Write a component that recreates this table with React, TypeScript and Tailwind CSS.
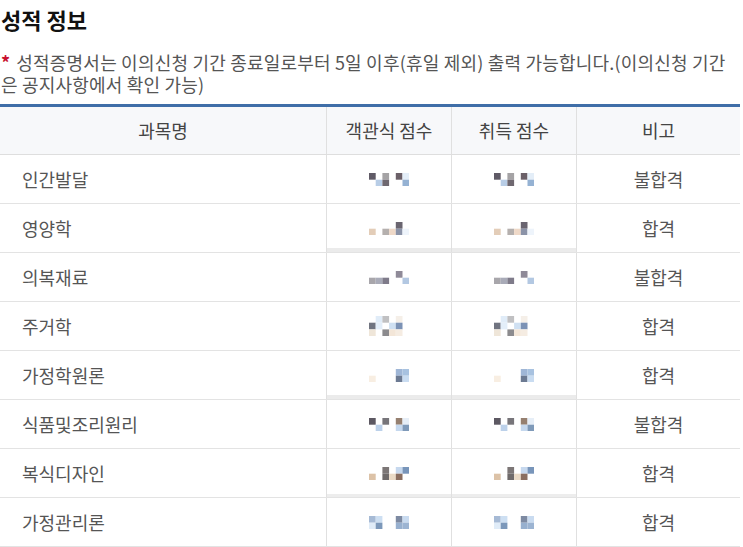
/**
 * 성적 정보 — grade table with pixelated (masked) score cells.
 */

const FONT = "font-['Noto_Sans_CJK_KR','Noto_Sans',sans-serif]";

type Row = {
  name: string;
  result: string;
  mosaic: string[]; // each line: 6 cells, "-" = empty
  band?: string; // extra bottom band on the score cells
};

const ROWS: Row[] = [
  {
    name: "인간발달",
    result: "불합격",
    mosaic: ["#5f5a66 - #a5a3a5 - #6b6068 #e4eef8", "- #b8cde6 #6f6870 - - #95b2d3"],
  },
  {
    name: "영양학",
    result: "합격",
    mosaic: ["- - - - #6a6570 -", "#e3cdb8 - #b5b0ae #efd9c8 #8b93a8 #eef4fb"],
    band: "shadow-[inset_0_-4px_0_#ebebeb]",
  },
  {
    name: "의복재료",
    result: "불합격",
    mosaic: ["- - - - #8f8a98 -", "#a8a6ab #a9abb8 #7f7b8a - - #b3c8e2"],
  },
  {
    name: "주거학",
    result: "합격",
    mosaic: [
      "- #e0ecf8 #c0c0c2 - #f5efe8 -",
      "#707480 #e3eef9 - #cfe0f2 #7c92b5 -",
      "#efe6d9 - #8c8b8e #f3e6d8 #f5ece2 -",
    ],
  },
  {
    name: "가정학원론",
    result: "합격",
    mosaic: ["- - - - #9fb6d6 #a8c2e0", "#f8eee2 - - - #6c7a92 #c9dcf1"],
    band: "shadow-[inset_0_-4px_0_#ebebeb]",
  },
  {
    name: "식품및조리원리",
    result: "불합격",
    mosaic: ["#5c5862 - #77757a - #968070 #e6eef7", "- #bcd1ea - - #c5d8ee #7f9ab9"],
  },
  {
    name: "복식디자인",
    result: "합격",
    mosaic: ["- - #7c7676 - #c6d8ee #7895ba", "#dcc2a7 - #6f6a6a #eadac6 #8a6e60 -"],
    band: "shadow-[inset_0_-3px_0_#ededed]",
  },
  {
    name: "가정관리론",
    result: "합격",
    mosaic: ["#a6bad5 #cddff2 - - #7d8aa2 #c9dbf0", "#e0ecf8 #7c98ba - - #97b0cf #9cb4d2"],
  },
];

function Mosaic({ lines }: { lines: string[] }) {
  const size = 6.7;
  const cells = lines.map((l) => l.split(" "));
  return (
    <svg width={40} height={Math.round(cells.length * size)} className="block">
      {cells.map((line, r) =>
        line.map((c, i) =>
          c === "-" ? null : (
            <rect key={`${r}-${i}`} x={i * size} y={r * size} width={size} height={size} fill={c} />
          )
        )
      )}
    </svg>
  );
}

export default function App() {
  return (
    <div className={`w-[743px] h-[547px] overflow-hidden bg-white ${FONT}`}>
      {/* Title */}
      <h1 className="pt-[5px] pl-[1px] text-[22px] leading-[28px] font-bold text-[#111]">성적 정보</h1>

      {/* Notice */}
      <p className="mt-[18px] pl-[1px] text-[18px] leading-[22px] tracking-[0.2px] text-[#555]">
        <span className="text-[#c8102e] font-bold mr-[6px]">*</span>
        성적증명서는 이의신청 기간 종료일로부터 5일 이후(휴일 제외) 출력 가능합니다.(이의신청 기간
        <br />
        은 공지사항에서 확인 가능)
      </p>

      {/* Table */}
      <div className="mt-[9px] w-[740px] border-t-[3px] border-[#3f6ea8] text-[18px] text-[#555]">
        <div className="grid grid-cols-[326px_125px_125px_164px] h-[48px] bg-[#f7f8fa] border-b border-[#dedede] text-[#444]">
          <div className="flex items-center justify-center">과목명</div>
          <div className="flex items-center justify-center border-l border-[#e0e0e0]">객관식 점수</div>
          <div className="flex items-center justify-center border-l border-[#e0e0e0]">취득 점수</div>
          <div className="flex items-center justify-center border-l border-[#e0e0e0]">비고</div>
        </div>

        {ROWS.map((row) => (
          <div
            key={row.name}
            className="grid grid-cols-[326px_125px_125px_164px] h-[49px] border-b border-[#e3e3e3]"
          >
            <div className="flex items-center pl-[22px]">{row.name}</div>
            <div className={`flex items-center justify-center border-l border-[#e0e0e0] ${row.band ?? ""}`}>
              <Mosaic lines={row.mosaic} />
            </div>
            <div className={`flex items-center justify-center border-l border-[#e0e0e0] ${row.band ?? ""}`}>
              <Mosaic lines={row.mosaic} />
            </div>
            <div className="flex items-center justify-center border-l border-[#e0e0e0]">{row.result}</div>
          </div>
        ))}
      </div>
    </div>
  );
}
